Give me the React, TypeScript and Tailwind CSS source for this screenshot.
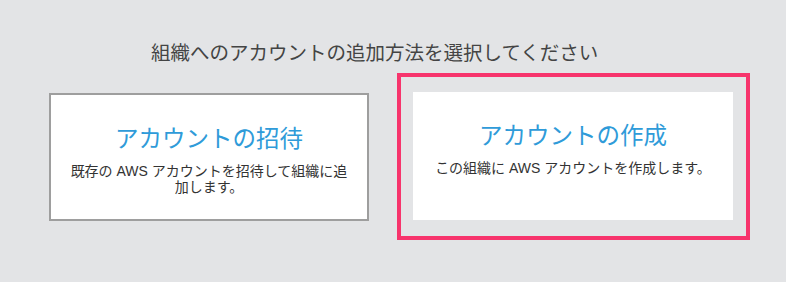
const font = "font-['Liberation_Sans','Noto_Sans_CJK_JP',sans-serif]";

function OptionCard({
    title,
    body,
    selected,
}: {
    title: string;
    body: string;
    selected?: boolean;
}) {
    return (
        <div
            className={`w-[320px] h-[128px] bg-white flex flex-col items-center px-4 pt-[28px] text-center ${
                selected ? "" : "border-2 border-[#9e9e9e]"
            }`}
        >
            <h2 className="text-[23.5px] leading-[32px] text-[#2f9bd9]">
                {title}
            </h2>
            <p className="mt-[8px] text-[14px] leading-[16.5px] text-[#333333]">
                {body}
            </p>
        </div>
    );
}

export default function App() {
    return (
        <div
            className={`w-[786px] h-[282px] bg-[#e3e4e6] pt-[39px] pl-[49px] ${font}`}
        >
            <h1 className="ml-[102px] text-[19.5px] leading-[28px] text-[#444444]">
                組織へのアカウントの追加方法を選択してください
            </h1>
            <div className="mt-[6px] flex flex-row items-center gap-[28px]">
                <OptionCard
                    title="アカウントの招待"
                    body="既存の AWS アカウントを招待して組織に追加します。"
                />
                <div className="border-4 border-[#f7346c] pl-3 pr-[13px] pt-[15px] pb-4">
                    <OptionCard
                        title="アカウントの作成"
                        body="この組織に AWS アカウントを作成します。"
                        selected
                    />
                </div>
            </div>
        </div>
    );
}
